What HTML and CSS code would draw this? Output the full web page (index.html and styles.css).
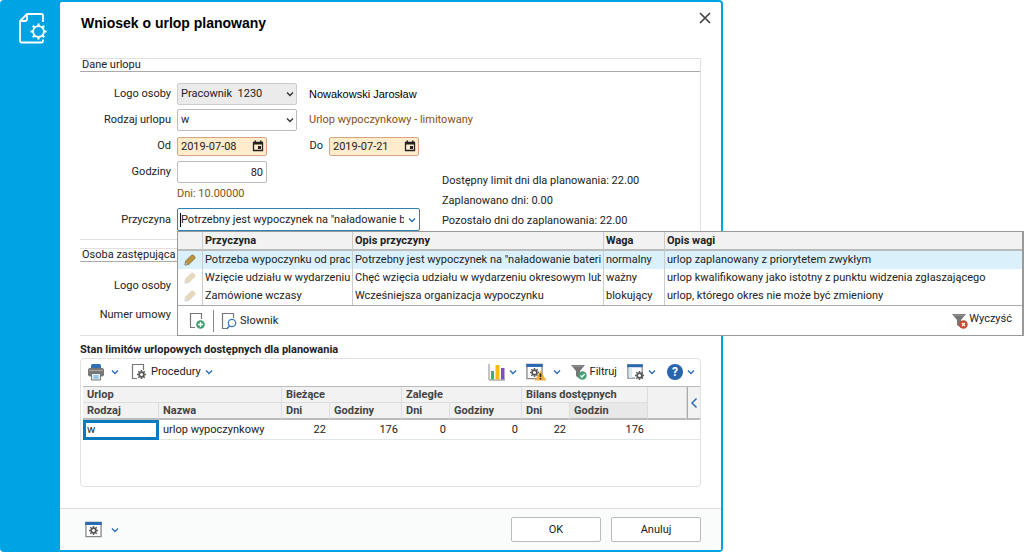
FILE: index.html
```html
<!DOCTYPE html>
<html lang="pl">
<head>
    <meta charset="UTF-8">
    <meta name="viewport" content="width=device-width, initial-scale=1.0">
    <title>Wniosek o urlop planowany</title>
    <link rel="stylesheet" href="styles.css">
</head>
<body>
<!-- Shared icons -->
<svg class="sprite" width="0" height="0">
    <symbol id="chevron" viewBox="0 0 8 8"><path d="M1 2.500l3 3 3-3" fill="none" stroke="currentColor" stroke-width="1.400"/></symbol>
    <symbol id="gear" viewBox="0 0 16 16">
        <circle cx="8" cy="8" r="4.200" fill="none" stroke="currentColor" stroke-width="3"/>
        <path d="M8 0v3M8 13v3M0 8h3M13 8h3M2.300 2.300l2.200 2.200M11.500 11.500l2.200 2.200M2.300 13.700l2.200-2.200M11.500 4.500l2.200-2.200" stroke="currentColor" stroke-width="2.600"/>
    </symbol>
    <symbol id="calendar" viewBox="0 0 12 12">
        <path d="M1.500 2.500h9v8h-9z" fill="none" stroke="#222" stroke-width="1.300"/>
        <path d="M1 2h10v2.500H1zM2.500.5H4V3H2.500zM8 .5h1.500V3H8zM6 6h3v3H6z" fill="#222"/>
    </symbol>
    <symbol id="pencil" viewBox="0 0 12 12">
        <path d="M1 11l.6-4L7.200 1.400q.8-.8 1.800-.3l1.800 1.600q.8.8.1 1.800L5 10.300z" fill="#b9933f" stroke="#8c6d2c" stroke-width=".7"/>
        <path d="M1 11l.5-3L4 10.500z" fill="#fff" stroke="#777" stroke-width=".8"/>
    </symbol>
    <symbol id="window" viewBox="0 0 18 18">
        <path d="M1 1.500h16v15H1z" fill="#fff" stroke="#888" stroke-width="1.400"/>
        <path d="M.3 1h17.400v3.200H.3z" fill="#2a68b2"/>
    </symbol>
    <symbol id="funnel" viewBox="0 0 16 16"><path d="M0 1h14L9 7v8l-4-3V7z" fill="#777"/><path d="M1.500 2.200h11" stroke="#999"/></symbol>
</svg>

<div class="dialog">
    <aside class="side">
        <svg width="30" height="32" viewBox="0 0 30 32" fill="none" stroke="#fff" stroke-width="1.800">
            <path d="M26 10V3.500Q26 2 24.500 2H10L3 9v19.500Q3 30.500 5 30.500h19.500q1.500 0 1.500-1.500v-1.500M10 2v5q0 2-2 2H3"/>
            <circle cx="21.500" cy="19.500" r="5.400"/>
            <path d="M21.500 11.500v2.600M21.500 24.900v2.600M13.500 19.500h2.600M26.900 19.500h2.600M15.800 13.800l1.900 1.900M25.300 23.300l1.900 1.900M15.800 25.200l1.900-1.900M25.300 15.700l1.900-1.900" stroke-width="2.200"/>
        </svg>
    </aside>
    <form class="window">
        <header class="titlebar">
            <h1>Wniosek o urlop planowany</h1>
            <button type="button" class="close" aria-label="Zamknij">
                <svg width="12" height="12" viewBox="0 0 12 12"><path d="M1 1l10 10M11 1L1 11" stroke="#444" stroke-width="1.700"/></svg>
            </button>
        </header>

        <main class="content">
            <fieldset class="group">
                <legend>Dane urlopu</legend>
                <div class="row">
                    <label for="osoba">Logo osoby</label>
                    <div class="combo">
                        <select id="osoba" class="disabled"><option>Pracownik&nbsp; 1230</option></select>
                        <svg class="arrow"><use href="#chevron"/></svg>
                    </div>
                    <span class="note person">Nowakowski Jarosław</span>
                </div>
                <div class="row">
                    <label for="rodzaj">Rodzaj urlopu</label>
                    <div class="combo">
                        <select id="rodzaj"><option>w</option></select>
                        <svg class="arrow"><use href="#chevron"/></svg>
                    </div>
                    <span class="note hint">Urlop wypoczynkowy - limitowany</span>
                </div>
                <div class="row">
                    <label for="od">Od</label>
                    <div class="combo date">
                        <input type="text" id="od" value="2019-07-08">
                        <svg class="cal"><use href="#calendar"/></svg>
                    </div>
                    <label for="do" class="to">Do</label>
                    <div class="combo date">
                        <input type="text" id="do" value="2019-07-21">
                        <svg class="cal"><use href="#calendar"/></svg>
                    </div>
                </div>
                <div class="split">
                    <div class="fields">
                        <div class="row">
                            <label for="godziny">Godziny</label>
                            <input type="text" id="godziny" class="hours" value="80">
                        </div>
                        <p class="days hint">Dni: 10.00000</p>
                        <div class="row reason-row">
                            <label for="przyczyna">Przyczyna</label>
                            <div class="reason">
                                <i class="caret"></i>
                                <input type="text" id="przyczyna" value="Potrzebny jest wypoczynek na &quot;naładowanie baterii&quot;">
                                <svg class="arrow"><use href="#chevron"/></svg>

                                <div class="popup">
                                    <table class="choices">
                                        <colgroup><col class="c-icon"><col class="c-reason"><col class="c-desc"><col class="c-weight"><col></colgroup>
                                        <thead>
                                            <tr><th></th><th>Przyczyna</th><th>Opis przyczyny</th><th>Waga</th><th>Opis wagi</th></tr>
                                        </thead>
                                        <tbody>
                                            <tr class="selected">
                                                <td><svg class="pencil"><use href="#pencil"/></svg></td>
                                                <td><div>Potrzeba wypoczynku od pracy</div></td>
                                                <td><div>Potrzebny jest wypoczynek na "naładowanie baterii"</div></td>
                                                <td>normalny</td>
                                                <td>urlop zaplanowany z priorytetem zwykłym</td>
                                            </tr>
                                            <tr>
                                                <td><svg class="pencil"><use href="#pencil"/></svg></td>
                                                <td><div>Wzięcie udziału w wydarzeniu</div></td>
                                                <td><div>Chęć wzięcia udziału w wydarzeniu okresowym lub</div></td>
                                                <td>ważny</td>
                                                <td>urlop kwalifikowany jako istotny z punktu widzenia zgłaszającego</td>
                                            </tr>
                                            <tr>
                                                <td><svg class="pencil"><use href="#pencil"/></svg></td>
                                                <td><div>Zamówione wczasy</div></td>
                                                <td><div>Wcześniejsza organizacja wypoczynku</div></td>
                                                <td>blokujący</td>
                                                <td>urlop, którego okres nie może być zmieniony</td>
                                            </tr>
                                        </tbody>
                                    </table>
                                    <div class="popup-bar">
                                        <button type="button" class="add" aria-label="Dodaj">
                                            <svg width="16" height="18" viewBox="0 0 16 18">
                                                <path d="M6 15.500H1.500V1.500h11V7" fill="none" stroke="#777" stroke-width="1.200"/>
                                                <circle cx="11.500" cy="12.500" r="4.300" fill="#3fa06f"/>
                                                <path d="M11.500 10v5M9 12.500h5" stroke="#fff" stroke-width="1.400"/>
                                            </svg>
                                        </button>
                                        <button type="button" class="dict">
                                            <svg width="16" height="18" viewBox="0 0 16 18" fill="none">
                                                <path d="M6 16.500H1.500V1.500h11V6" stroke="#777" stroke-width="1.200"/>
                                                <circle cx="11" cy="11" r="3.700" stroke="#3b7abf" stroke-width="1.300"/>
                                                <path d="M8.500 13.700L5.800 17" stroke="#3b7abf" stroke-width="1.500"/>
                                            </svg>
                                            Słownik
                                        </button>
                                        <button type="button" class="clear">
                                            <svg width="16" height="16" viewBox="0 0 16 16">
                                                <use href="#funnel"/>
                                                <circle cx="11.500" cy="11.500" r="4.200" fill="#d0472c"/>
                                                <path d="M10 10l3 3M13 10l-3 3" stroke="#fff" stroke-width="1.200"/>
                                            </svg>
                                            <span>Wyczyść</span>
                                        </button>
                                    </div>
                                </div>
                            </div>
                        </div>
                    </div>
                    <div class="summary">
                        <p>Dostępny limit dni dla planowania: 22.00</p>
                        <p>Zaplanowano dni: 0.00</p>
                        <p>Pozostało dni do zaplanowania: 22.00</p>
                    </div>
                </div>
            </fieldset>

            <fieldset class="group deputy">
                <legend>Osoba zastępująca</legend>
                <div class="row">
                    <label for="zastepca">Logo osoby</label>
                    <input type="text" id="zastepca">
                </div>
                <div class="row">
                    <label for="umowa">Numer umowy</label>
                    <input type="text" id="umowa">
                </div>
            </fieldset>

            <h2>Stan limitów urlopowych dostępnych dla planowania</h2>
            <section class="panel">
                <div class="toolbar">
                    <button type="button" aria-label="Drukuj">
                        <svg width="18" height="18" viewBox="0 0 18 18">
                            <path d="M4 5V2.500Q4 1 5.500 1h7Q14 1 14 2.500V5z" fill="#2f6db5"/>
                            <rect x="1" y="5" width="16" height="8.500" rx="2" fill="#777"/>
                            <path d="M2 7.500h14" stroke="#aaa"/>
                            <path d="M4.500 10.500h9V17h-9z" fill="#e5f2fb" stroke="#777"/>
                            <path d="M6.500 13h5M6.500 15h5" stroke="#4b9bd2"/>
                        </svg>
                        <svg class="arrow"><use href="#chevron"/></svg>
                    </button>
                    <button type="button" class="procedures">
                        <svg width="16" height="18" viewBox="0 0 16 18">
                            <path d="M6 15.500H1.500V1.500h11V7" fill="none" stroke="#777" stroke-width="1.200"/>
                            <use href="#gear" x="6" y="7" width="9" height="9" color="#555"/>
                        </svg>
                        <span>Procedury</span>
                        <svg class="arrow"><use href="#chevron"/></svg>
                    </button>
                    <button type="button" class="chart" aria-label="Wykres">
                        <svg width="18" height="18" viewBox="0 0 18 18">
                            <path d="M1 1v16h16" fill="none" stroke="#888"/>
                            <path d="M3 8h3v8.500H3z" fill="#42ae66"/>
                            <path d="M7.500 2h4v14.500h-4z" fill="#fdbb11"/>
                            <path d="M13 5h3.500v11.500H13z" fill="#7b4fc0"/>
                        </svg>
                        <svg class="arrow"><use href="#chevron"/></svg>
                    </button>
                    <button type="button" class="warn" aria-label="Ostrzeżenia">
                        <svg width="21" height="18" viewBox="0 0 21 18">
                            <use href="#window" width="17" height="17"/>
                            <use href="#gear" x="4" y="5" width="9" height="9" color="#555"/>
                            <path d="M14.500 7.500L20.500 17.500h-12z" fill="#f4b144"/>
                            <path d="M14.500 10.500v3.500M14.500 15v1.500" stroke="#222" stroke-width="1.700"/>
                        </svg>
                        <svg class="arrow"><use href="#chevron"/></svg>
                    </button>
                    <button type="button" class="filter">
                        <svg width="16" height="16" viewBox="0 0 16 16">
                            <use href="#funnel"/>
                            <circle cx="11.500" cy="11.500" r="4.200" fill="#43a274"/>
                            <path d="M9.500 11.500l1.500 1.500 2.700-3" fill="none" stroke="#fff" stroke-width="1.300"/>
                        </svg>
                        Filtruj
                    </button>
                    <button type="button" class="view" aria-label="Widok">
                        <svg width="17" height="18" viewBox="0 0 17 18">
                            <use href="#window" width="16" height="17"/>
                            <path d="M2 5h3v10H2z" fill="#d3eaf7"/>
                            <path d="M8 9h7v7H8z" fill="#fff"/>
                            <use href="#gear" x="8" y="8" width="9" height="9" color="#555"/>
                        </svg>
                        <svg class="arrow"><use href="#chevron"/></svg>
                    </button>
                    <button type="button" class="help" aria-label="Pomoc">
                        <span class="mark">?</span>
                        <svg class="arrow"><use href="#chevron"/></svg>
                    </button>
                </div>
                <table class="limits">
                    <colgroup><col class="w-kind"><col><col class="w-day"><col class="w-hour"><col class="w-day"><col class="w-hour"><col class="w-day"><col class="w-last"><col class="w-blank"><col class="w-fold"></colgroup>
                    <thead>
                        <tr>
                            <th colspan="2">Urlop</th>
                            <th colspan="2">Bieżące</th>
                            <th colspan="2">Zaległe</th>
                            <th colspan="2">Bilans dostępnych</th>
                            <th rowspan="2"></th>
                            <th rowspan="2" class="fold">
                                <button type="button" aria-label="Rozwiń">
                                    <svg width="8" height="12" viewBox="0 0 8 12"><path d="M6.500 1.500L2 6l4.500 4.500" fill="none" stroke="#2f6db5" stroke-width="1.500"/></svg>
                                </button>
                            </th>
                        </tr>
                        <tr>
                            <th>Rodzaj</th><th>Nazwa</th><th>Dni</th><th>Godziny</th><th>Dni</th><th>Godziny</th><th>Dni</th><th class="sorted">Godzin</th>
                        </tr>
                    </thead>
                    <tbody>
                        <tr>
                            <td class="active">w</td>
                            <td>urlop wypoczynkowy</td>
                            <td class="num">22</td>
                            <td class="num">176</td>
                            <td class="num">0</td>
                            <td class="num">0</td>
                            <td class="num">22</td>
                            <td class="num">176</td>
                            <td></td>
                            <td></td>
                        </tr>
                    </tbody>
                </table>
            </section>
        </main>

        <footer class="footer">
            <button type="button" class="options" aria-label="Opcje">
                <svg width="18" height="17" viewBox="0 0 18 17">
                    <use href="#window" width="17" height="17"/>
                    <use href="#gear" x="4" y="5" width="9" height="9" color="#555"/>
                </svg>
                <svg class="arrow"><use href="#chevron"/></svg>
            </button>
            <button type="submit" class="btn">OK</button>
            <button type="button" class="btn">Anuluj</button>
        </footer>
    </form>
</div>
</body>
</html>
```
FILE: styles.css
```css
* {
    box-sizing: border-box;
}
body {
    margin: 0;
    padding: 0 301px 1px 0;
    min-height: 100vh;
    display: flex;
    background-color: #fff;
    font-family: Roboto, "Noto Sans", sans-serif;
    font-size: 11px;
    line-height: 14px;
    color: #222;
}
h1, h2, p {
    margin: 0;
}
input, select, button {
    font: inherit;
    color: inherit;
    margin: 0;
}
button {
    display: flex;
    align-items: center;
    padding: 0;
    border: none;
    background: none;
    cursor: pointer;
}
.sprite {
    position: absolute;
}
.arrow {
    width: 8px;
    height: 8px;
    flex: none;
    color: #2f6db5;
}

/* Dialog frame */
.dialog {
    flex: 1;
    display: flex;
    padding: 2px 2px 2px 0;
    background-color: #00a4e4;
    border-radius: 4px;
}
.side {
    width: 60px;
    flex: none;
    padding: 10px 0 0 17px;
}
.window {
    flex: 1;
    display: flex;
    flex-direction: column;
    min-width: 0;
    background-color: #fff;
    border-radius: 2px;
}
.titlebar {
    display: flex;
    align-items: center;
    justify-content: space-between;
    height: 34px;
    padding: 8px 10px 0 21px;
}
.titlebar h1 {
    font: bold 14px/18px "Liberation Sans", Arial, sans-serif;
    color: #000;
}
.close {
    margin-bottom: 10px;
}
.content {
    flex: 1;
    padding: 22px 20px 20px;
}

/* Form groups */
.group {
    margin: 0 0 8px;
    padding: 0 0 8px;
    min-width: 0;
    border: 1px solid #e0e0e0;
    border-left: none;
}
.group legend {
    float: left;
    width: 100%;
    margin-bottom: 9px;
    padding: 0 2px;
    line-height: 12px;
    border-bottom: 1px solid #aaa;
}
.group legend + * {
    clear: both;
}
.row {
    display: flex;
    align-items: center;
    height: 26px;
}
.row label {
    width: 91px;
    margin-right: 6px;
    flex: none;
    text-align: right;
}
.row .to {
    width: 56px;
}
.row input, .row select {
    height: 22px;
    width: 120px;
    padding: 0 3px;
    border: 1px solid #bbb;
    border-radius: 2px;
    background-color: #fff;
    appearance: none;
    outline: none;
}
.row .disabled {
    background-color: #ebebeb;
    border-color: #ccc;
}
.combo {
    display: grid;
    align-items: center;
}
.combo > * {
    grid-area: 1 / 1;
}
.combo svg {
    justify-self: end;
    margin-right: 3px;
    pointer-events: none;
    color: #333;
}
.row .date input {
    width: 90px;
    height: 19px;
    background-color: #ffeccc;
    border-color: #d9a583;
}
.cal {
    width: 12px;
    height: 12px;
}
.note {
    margin-left: 12px;
}
.person {
    font-family: "Liberation Sans", Arial, sans-serif;
    color: #000;
}
.hint {
    color: #8a4f14;
}
.split {
    display: flex;
    align-items: flex-end;
    gap: 22px;
}
.row .hours {
    width: 90px;
    text-align: right;
}
.days {
    margin-left: 97px;
    line-height: 18px;
}
.reason-row {
    height: 28px;
    padding-top: 5px;
}
.reason {
    position: relative;
    display: flex;
    align-items: center;
    width: 243px;
    height: 23px;
    padding: 0 3px 0 2px;
    border: 1px solid #2f80b5;
    border-radius: 2px;
}
.reason .caret {
    width: 1px;
    height: 14px;
    background-color: #000;
}
.row .reason input {
    flex: 1;
    width: auto;
    min-width: 0;
    height: 20px;
    padding: 0;
    margin-right: 4px;
    border: none;
}
.summary {
    line-height: 20px;
}
.deputy {
    margin-bottom: 7px;
    padding-bottom: 6px;
}
.deputy .row {
    height: 29px;
}

/* Drop-down list */
.popup {
    position: absolute;
    z-index: 1;
    top: 22px;
    left: -1px;
    width: calc(100vw - 177px);
    background-color: #fff;
    border: 1px solid #999;
    border-right-width: 2px;
}
table {
    width: 100%;
    border-collapse: separate;
    border-spacing: 0;
    table-layout: fixed;
}
th, td {
    padding: 0 2px;
    text-align: left;
    white-space: nowrap;
}
th {
    background-color: #f2f2f2;
}
.choices {
    border-bottom: 1px solid #aaa;
}
.choices th {
    height: 19px;
    border-bottom: 2px solid #bbb;
}
.choices th, .choices td {
    border-right: 1px solid #ccc;
}
.choices th:last-child, .choices td:last-child {
    border-right: none;
}
.choices td {
    height: 18px;
}
.choices td div {
    overflow: hidden;
}
.choices .selected td {
    background-color: #daf1fc;
}
.c-icon { width: 25px; }
.c-reason { width: 150px; }
.c-desc { width: 251px; }
.c-weight { width: 61px; }
.pencil {
    display: block;
    width: 12px;
    height: 12px;
    margin: 0 auto;
    opacity: 0.35;
}
.selected .pencil {
    opacity: 1;
}
.popup-bar {
    display: flex;
    align-items: center;
    height: 29px;
    padding: 0 10px 0 11px;
}
.add {
    height: 22px;
    padding-right: 8px;
    border-right: 1px solid #888;
}
.dict {
    gap: 3px;
    margin-left: 7px;
}
.clear {
    gap: 1px;
    margin-left: auto;
}
.clear span {
    margin-bottom: 4px;
}

/* Limits grid */
h2 {
    font-size: 11px;
    line-height: 14px;
    font-weight: bold;
    margin-bottom: 1px;
}
.panel {
    height: 129px;
    border: 1px solid #e2e2e2;
    border-radius: 4px;
    padding-left: 2px;
}
.toolbar {
    display: flex;
    align-items: center;
    height: 27px;
    padding: 0 5px 1px 4px;
}
.toolbar button {
    gap: 6px;
}
.toolbar .procedures {
    margin-left: 12px;
    gap: 4px;
}
.toolbar .chart {
    margin-left: auto;
    gap: 3px;
}
.toolbar .warn {
    margin-left: 9px;
}
.toolbar .filter {
    margin-left: 10px;
    gap: 3px;
}
.toolbar .view {
    margin-left: 10px;
    gap: 4px;
}
.toolbar .help {
    margin-left: 11px;
    gap: 4px;
}
.mark {
    width: 16px;
    height: 16px;
    border-radius: 50%;
    background-color: #2766ae;
    color: #fff;
    font-weight: bold;
    font-size: 12px;
    line-height: 16px;
    text-align: center;
}
.limits {
    border-top: 1px solid #bbb;
}
.limits th {
    height: 16px;
    border-right: 1px solid #ddd;
    border-bottom: 1px solid #ddd;
    color: #444;
}
.limits tr + tr th, .limits th[rowspan] {
    border-bottom: 2px solid #bbb;
}
.limits tr + tr th {
    height: 17px;
}
.limits th, .limits td {
    padding: 0 4px;
}
.limits .sorted {
    background-color: #e8e8e8;
}
.limits .fold {
    padding: 0 2px;
    border-left: 1px solid #aaa;
    border-right: none;
}
.limits td {
    height: 20px;
    border-bottom: 1px solid #dde5e8;
}
.limits .active {
    padding: 0 1px;
    border: 3px solid #0a7abf;
}
.limits .num {
    text-align: right;
}
.w-kind { width: 76px; }
.w-day { width: 48px; }
.w-hour { width: 72px; }
.w-last { width: 78px; }
.w-blank { width: 39px; }
.w-fold { width: 13px; }

/* Bottom bar */
.footer {
    display: flex;
    align-items: center;
    gap: 10px;
    height: 42px;
    padding: 0 20px 0 25px;
    background-color: #fafcfb;
    border-top: 1px solid #ddd;
}
.options {
    gap: 8px;
    margin-right: auto;
}
.btn {
    justify-content: center;
    width: 90px;
    height: 25px;
    border: 1px solid #bbb;
    border-radius: 2px;
    background-color: #fff;
}
```
